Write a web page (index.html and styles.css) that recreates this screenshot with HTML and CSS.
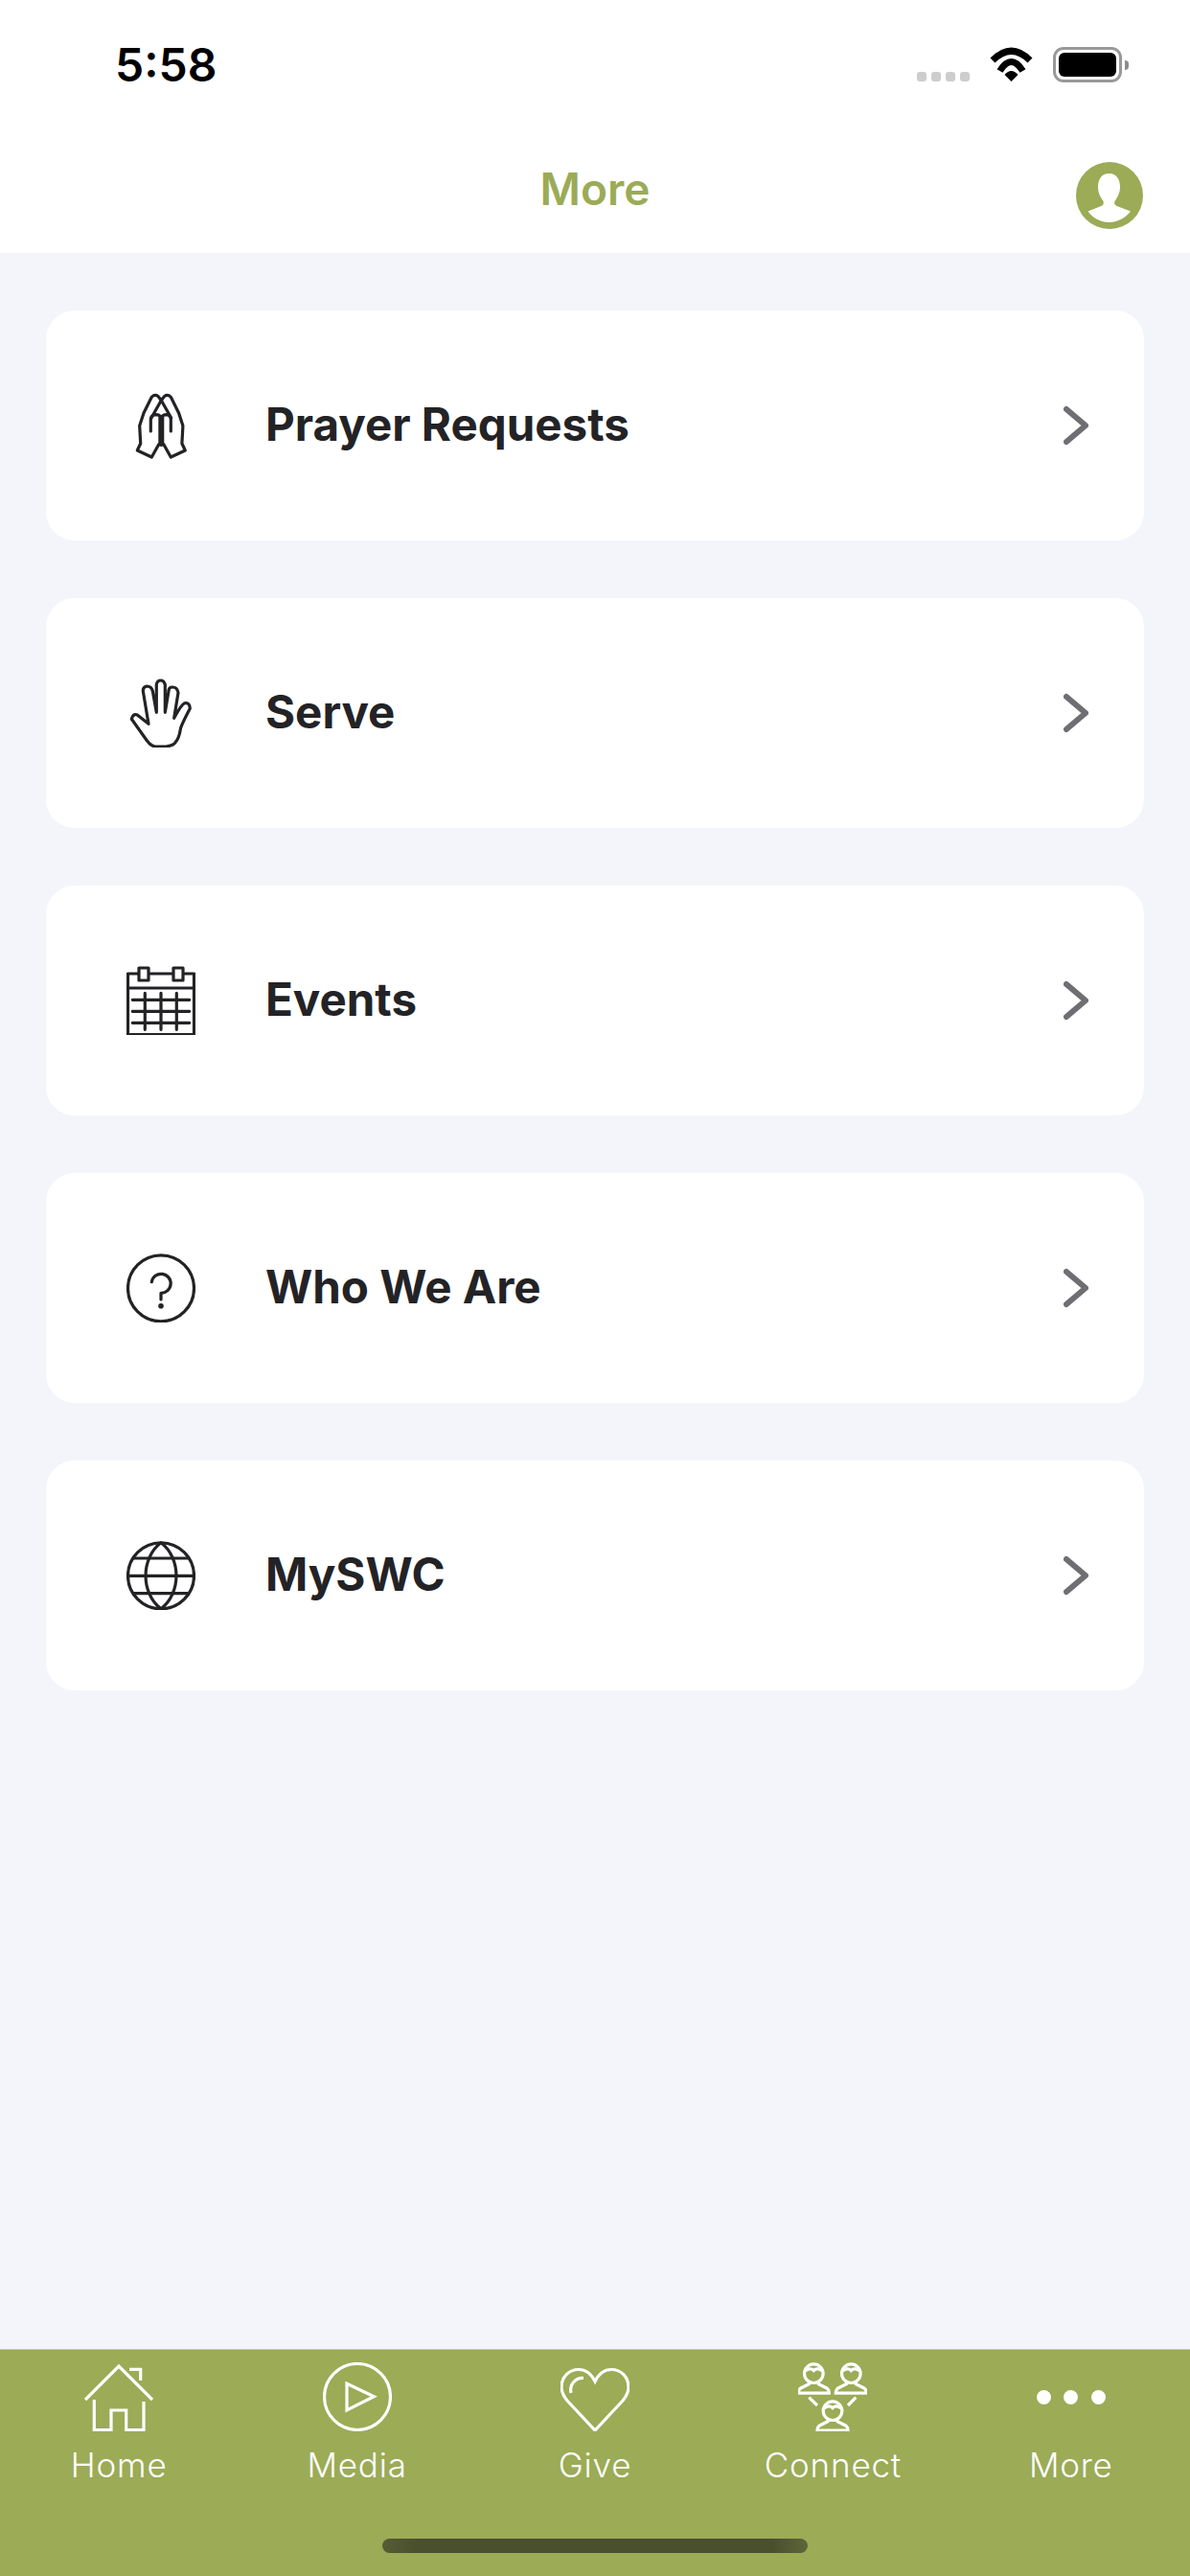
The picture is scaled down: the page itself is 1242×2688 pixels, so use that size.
FILE: index.html
```html
<!DOCTYPE html>
<html>
<head>
	<meta charset="utf-8">
	<title>More</title>
	<link rel="stylesheet" href="styles.css">
</head>
<body>
<div class="page">
	<header class="top">
		<div class="status">
			<span class="time">5:58</span>
			<div class="status-right">
				<div class="signal"><i></i><i></i><i></i><i></i></div>
				<svg class="wifi" width="47" height="36" viewBox="0 0 47 36">
					<path d="M4 14Q23.5 -5.5 43 14" fill="none" stroke="#000" stroke-width="7"/>
					<path d="M11.5 25Q23.5 6 35.5 25" fill="none" stroke="#000" stroke-width="7"/>
					<path d="M23.5 36L16.5 29Q23.5 21 30.5 29Z" fill="#000"/>
				</svg>
				<div class="battery"><div class="battery-fill"></div></div>
			</div>
		</div>
		<div class="nav">
			<h1 class="nav-title">More</h1>
			<svg class="avatar" width="70" height="70" viewBox="0 0 70 70">
				<circle cx="35" cy="35" r="35" fill="#9bab56"/>
				<path d="M34.5 12C27 12 23 18 23 26C23 33 26 37 28.5 41C29.5 44 28 45.5 25 46.5L12.5 51.5C18 59 26 63 34.5 63C43 63 51 59 57 51.5L44 46.5C41 45.5 39.5 44 40.5 41C43 37 46 33 46 26C46 18 42 12 34.5 12Z" fill="#fff"/>
			</svg>
		</div>
	</header>

	<main class="list">
		<a class="card">
			<svg class="card-icon" viewBox="0 0 72 72">
				<path d="M33.7 55.7L26.3 69L11.3 62L14.7 54.7L13.7 36.3L18 23L26.3 6.3Q29.7 3 33 5.5L36.3 9.7L39.6 5.5Q43 3 46.3 6.3L54.6 23L58.9 36.3L57.9 54.7L61.3 62L46.3 69L38.9 55.7"/>
				<path d="M36.3 9.7L26 28"/>
				<path d="M36.3 9.7L46.6 28"/>
				<path d="M25.3 42V30Q25.3 25 31 24.7Q36.3 25 36.3 30"/>
				<path d="M46.3 42V30Q46.3 25 41.6 24.7Q36.3 25 36.3 30"/>
				<path d="M36.3 28V55" stroke-width="6"/>
			</svg>
			<span class="card-label">Prayer Requests</span>
			<svg class="chevron" width="28" height="44" viewBox="0 0 28 44"><path d="M3 5L23 22L3 39"/></svg>
		</a>
		<a class="card">
			<svg class="card-icon" viewBox="0 0 72 72">
				<path d="M23 47.3L11.3 38Q7 36 5.3 42.3L21.3 64.7Q25 70 29.7 71L41.3 71Q49 70 51.3 66.3Q55 62 56.3 53Q57 49 66.3 31.3Q66 25 61.3 25.7Q58 26 49.7 41.3L54 14.7Q53 9 48 9Q44 9 44 13L40.3 35.3V6.3Q39 2 35.7 2Q32 2 31.3 6.3V35.3L27.3 13Q26 8 21.3 8Q17 9 17.3 13L23 47.3"/>
			</svg>
			<span class="card-label">Serve</span>
			<svg class="chevron" width="28" height="44" viewBox="0 0 28 44"><path d="M3 5L23 22L3 39"/></svg>
		</a>
		<a class="card">
			<svg class="card-icon" viewBox="0 0 72 72">
				<rect x="1.5" y="8" width="69" height="63.5"/>
				<path d="M1.5 23H70.5"/>
				<rect class="tab-ring" x="13" y="2" width="10" height="13"/>
				<rect class="tab-ring" x="49" y="2" width="10" height="13"/>
				<path d="M6.3 35.3H65.7M6.3 47.3H65.7M6.3 59.3H65.7M19.3 28.3V66.3M36 28.3V66.3M52.3 28.3V66.3"/>
			</svg>
			<span class="card-label">Events</span>
			<svg class="chevron" width="28" height="44" viewBox="0 0 28 44"><path d="M3 5L23 22L3 39"/></svg>
		</a>
		<a class="card">
			<svg class="card-icon" viewBox="0 0 72 72">
				<circle cx="36" cy="36.3" r="34.5"/>
				<path d="M26.3 29.7A10 10 0 1 1 36 41.3V48"/>
				<circle class="dot" cx="36" cy="54.7" r="2.8"/>
			</svg>
			<span class="card-label">Who We Are</span>
			<svg class="chevron" width="28" height="44" viewBox="0 0 28 44"><path d="M3 5L23 22L3 39"/></svg>
		</a>
		<a class="card">
			<svg class="card-icon" viewBox="0 0 72 72">
				<circle cx="36" cy="36.3" r="34.5"/>
				<path d="M36 1.8C14.7 18 14.7 54.6 36 70.8C57.3 54.6 57.3 18 36 1.8Z"/>
				<path d="M8 18H64M1.5 36.3H70.5M8 54.7H64"/>
			</svg>
			<span class="card-label">MySWC</span>
			<svg class="chevron" width="28" height="44" viewBox="0 0 28 44"><path d="M3 5L23 22L3 39"/></svg>
		</a>
	</main>

	<nav class="tabs">
		<div class="tab-row">
			<a class="tab">
				<svg class="tab-icon" viewBox="0 0 72 72">
					<path d="M1 39L36 4L71 39M47 7.3H58.7V19M10.3 39V70.7H28V50H43.7V70.7H62V41"/>
				</svg>
				<span class="tab-label">Home</span>
			</a>
			<a class="tab">
				<svg class="tab-icon" viewBox="0 0 72 72">
					<circle cx="36" cy="36" r="34.5"/>
					<path d="M25 22.3L53.3 35.7L25 50Z"/>
				</svg>
				<span class="tab-label">Media</span>
			</a>
			<a class="tab">
				<svg class="tab-icon" viewBox="0 0 72 72">
					<path d="M36 71L7 40C3 35 1 31 1 26C1 15 9 7.5 19 7.5C26 7.5 32 12 36 20C40 12 46 7.5 53 7.5C63 7.5 71 15 71 26C71 31 69 35 65 40Z"/>
					<path d="M11 32C9 24 15 16 24 16.5"/>
				</svg>
				<span class="tab-label">Give</span>
			</a>
			<a class="tab">
				<svg class="tab-icon" viewBox="0 0 72 72">
					<defs>
						<g id="person">
							<circle cx="0" cy="0" r="9.8"/>
							<path d="M-9 -3C-5 -5 -3 -6 0 -3C3 -6 5 -5 9 -3"/>
							<path d="M-5 8V11L-14 15.5Q-16 17 -16 20.5H16Q16 17 14 15.5L5 11V8"/>
						</g>
					</defs>
					<use href="#person" x="16.3" y="11.7"/>
					<use href="#person" x="55.3" y="11.7"/>
					<use href="#person" x="36" y="50.7"/>
					<path d="M11.3 36.7L20 45M60.3 36.7L52 45"/>
				</svg>
				<span class="tab-label">Connect</span>
			</a>
			<a class="tab">
				<div class="tab-dots"><i></i><i></i><i></i></div>
				<span class="tab-label">More</span>
			</a>
		</div>
		<div class="home-bar"></div>
	</nav>
</div>
</body>
</html>
```

FILE: styles.css
```css
html, body{
	margin: 0;
	padding: 0;
}
body{
	font-family: Inter, "Liberation Sans", sans-serif;
	color: #232326;
}
a{
	text-decoration: none;
}
.page{
	width: 1242px;
	height: 2688px;
	display: flex;
	flex-direction: column;
	background: #f3f5fa;
	overflow: hidden;
}
.top{
	height: 264px;
	background: #fff;
	display: flex;
	flex-direction: column;
}
.status{
	height: 136px;
	padding: 0 71px 0 120px;
	display: flex;
	justify-content: space-between;
	align-items: flex-start;
}
.time{
	margin-top: 39px;
	font-size: 48px;
	line-height: 58px;
	font-weight: 600;
	color: #000;
}
.status-right{
	margin-top: 49px;
	display: flex;
	align-items: flex-start;
}
.signal{
	margin-top: 26px;
	display: flex;
	gap: 5px;
}
.signal i{
	width: 10px;
	height: 10px;
	border-radius: 3px;
	background: #cdcdcd;
}
.wifi{
	margin-left: 20px;
}
.battery{
	position: relative;
	box-sizing: border-box;
	width: 72px;
	height: 37px;
	margin-left: 20px;
	padding: 3px;
	border: 3px solid #999;
	border-radius: 11px;
}
.battery:after{
	content: "";
	position: absolute;
	top: 11px;
	right: -10px;
	width: 4px;
	height: 10px;
	border-radius: 0 4px 4px 0;
	background: #8c8c8c;
}
.battery-fill{
	height: 100%;
	background: #000;
	border-radius: 6px;
}
.nav{
	position: relative;
	display: flex;
	justify-content: center;
	padding-top: 28px;
}
.nav-title{
	margin: 0;
	font-size: 46px;
	line-height: 66px;
	font-weight: 600;
	color: #9bab56;
}
.avatar{
	position: absolute;
	top: 33px;
	right: 49px;
}
.list{
	flex: 1;
	padding: 60px 48px 0;
	display: flex;
	flex-direction: column;
	gap: 60px;
}
.card{
	height: 240px;
	padding: 0 56px 0 84px;
	display: flex;
	align-items: center;
	background: #fff;
	border-radius: 30px;
}
.card-icon{
	width: 72px;
	height: 72px;
	fill: none;
	stroke: #232326;
	stroke-width: 3.2;
	stroke-linejoin: round;
	stroke-linecap: round;
}
.card-icon .tab-ring{
	fill: #fff;
}
.card-icon .dot{
	fill: #232326;
	stroke: none;
}
.card-label{
	flex: 1;
	margin-left: 73px;
	padding-bottom: 4px;
	font-size: 47.5px;
	font-weight: 700;
	color: #232326;
}
.chevron{
	fill: none;
	stroke: #6e6e73;
	stroke-width: 6;
	stroke-linecap: round;
	stroke-linejoin: round;
}
.tabs{
	height: 237px;
	box-sizing: border-box;
	background: #9bab56;
	border-top: 1px solid #ccc;
	display: flex;
	flex-direction: column;
	justify-content: space-between;
	align-items: center;
	padding: 13px 0 24px;
}
.tab-row{
	width: 100%;
	display: flex;
}
.tab{
	flex: 1;
	display: flex;
	flex-direction: column;
	align-items: center;
}
.tab-icon{
	width: 72px;
	height: 72px;
	fill: none;
	stroke: #fff;
	stroke-width: 3.2;
}
.tab-dots{
	height: 72px;
	display: flex;
	align-items: center;
	gap: 13.5px;
}
.tab-dots i{
	width: 15px;
	height: 15px;
	border-radius: 50%;
	background: #fff;
}
.tab-label{
	margin-top: 14px;
	font-size: 35px;
	font-weight: 350;
	letter-spacing: 0.8px;
	line-height: 42px;
	color: #fff;
}
.home-bar{
	width: 444px;
	height: 15px;
	border-radius: 8px;
	background: linear-gradient(90deg, #565c35 0, #4a4f2e 8%, #4a4f2e 92%, #5f6639 100%);
}
```
